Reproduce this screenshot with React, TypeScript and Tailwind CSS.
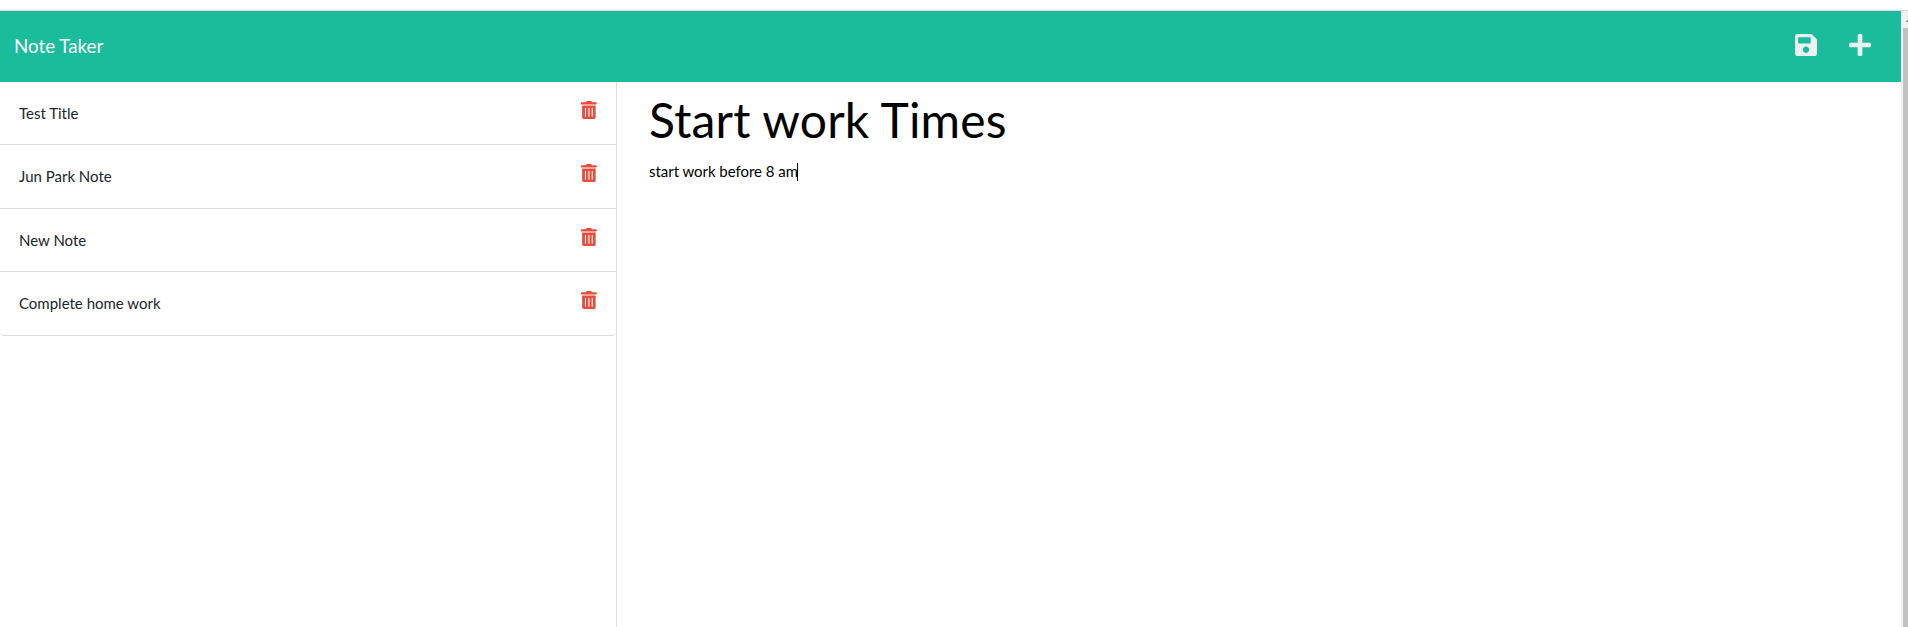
import { FaPlus, FaSave, FaTrashAlt } from "react-icons/fa";

const notes = [
  { title: "Test Title", row: "h-[63px]" },
  { title: "Jun Park Note", row: "h-[64px]" },
  { title: "New Note", row: "h-[63px]" },
  { title: "Complete home work", row: "h-[64px] rounded-b" },
];

function Header() {
  return (
    <nav className="flex h-[71px] shrink-0 items-center justify-between bg-[#1abc9c] pl-[14px] pr-[30px]">
      <span className="-mt-[1px] text-[18.75px] leading-7 text-white">Note Taker</span>
      <div className="-mt-[3px] flex items-center gap-8 text-[#ecf0f1]">
        <FaSave className="h-[26px] w-[22px]" />
        <FaPlus className="h-[26px] w-[22px]" />
      </div>
    </nav>
  );
}

function NoteList() {
  return (
    <aside className="w-[617px] shrink-0 border-r border-[#dfdfdf]">
      <ul>
        {notes.map((note) => (
          <li
            key={note.title}
            className={`flex justify-between border-b border-[#dfdfdf] pl-[19px] pr-[19px] pt-[19px] ${note.row}`}
          >
            <span className="mt-px text-[15px] leading-[23px] text-[#212529]">{note.title}</span>
            <FaTrashAlt className="h-[18px] w-[15.75px] text-[#e74c3c]" />
          </li>
        ))}
      </ul>
    </aside>
  );
}

function Editor() {
  return (
    <main className="flex flex-col items-start pl-[32px] text-black">
      <h1 className="mt-[2px] h-[72px] text-[48px] leading-[72px] tracking-[0.2px]">Start work Times</h1>
      <div className="mt-[4px] flex items-center">
        <p className="text-[15px] leading-[23px] tracking-[-0.04px]">start work before 8 am</p>
        <span className="-ml-[1px] h-[18px] w-px bg-black" />
      </div>
    </main>
  );
}

export default function App() {
  return (
    <div className="flex h-[627px] flex-col overflow-hidden bg-white font-['Lato',sans-serif]">
      <div className="h-[11px] shrink-0 border-b border-[#dadada]" />
      <div className="flex min-h-0 flex-1">
        <div className="flex min-w-0 flex-1 flex-col">
          <Header />
          <div className="flex flex-1 rounded-none">
            <NoteList />
            <Editor />
          </div>
        </div>
        <div className="flex w-[7px] flex-col overflow-hidden bg-[#f1f1f1]">
          <div className="flex h-[17px] shrink-0 justify-end">
            <svg className="mt-[9px] h-[2px] w-[2px]" viewBox="0 0 2 2" shapeRendering="crispEdges">
              <path d="M1 0h1v2H0V1h1z" fill="#8b8b8b" />
            </svg>
          </div>
          <div className="ml-[2px] flex-1 bg-[#c1c1c1]" />
        </div>
      </div>
    </div>
  );
}
